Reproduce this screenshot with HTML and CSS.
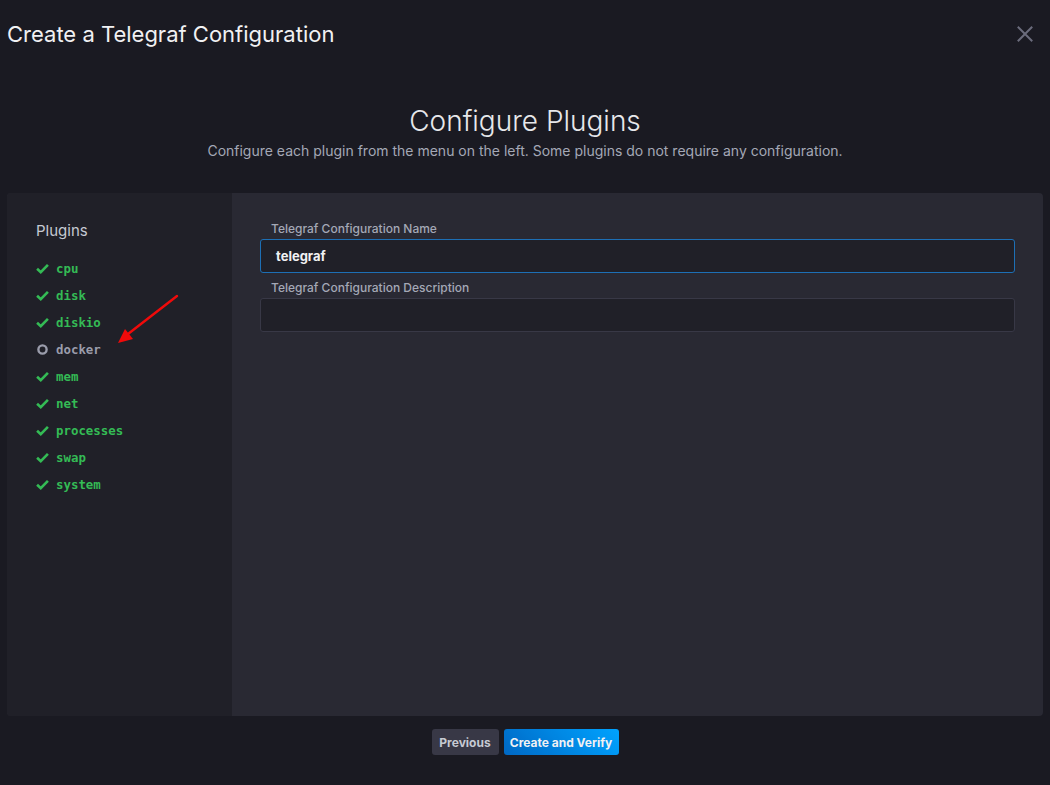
FILE: index.html
```html
<!DOCTYPE html>
<html>
<head>
<meta charset="utf-8">
<link rel="stylesheet" href="styles.css">
</head>
<body>
<div class="overlay">
  <header class="top">
    <h1 class="title">Create a Telegraf Configuration</h1>
    <button class="close" aria-label="close">
      <svg width="16" height="16" viewBox="0 0 16 16"><path d="M1.5 1.5 L14.5 14.5 M14.5 1.5 L1.5 14.5" stroke="#6b6c7c" stroke-width="2" stroke-linecap="square"/></svg>
    </button>
  </header>
  <div class="intro">
    <h2 class="heading">Configure Plugins</h2>
    <p class="sub">Configure each plugin from the menu on the left. Some plugins do not require any configuration.</p>
  </div>
  <div class="panel">
    <aside class="side">
      <h3 class="side-title">Plugins</h3>
      <ul class="plugins">
        <li class="ok"><svg class="ic" viewBox="0 0 12 10"><path d="M1 5.2 L4.4 8.4 L11 1.6" fill="none" stroke="currentColor" stroke-width="2.4"/></svg>cpu</li>
        <li class="ok"><svg class="ic" viewBox="0 0 12 10"><path d="M1 5.2 L4.4 8.4 L11 1.6" fill="none" stroke="currentColor" stroke-width="2.4"/></svg>disk</li>
        <li class="ok"><svg class="ic" viewBox="0 0 12 10"><path d="M1 5.2 L4.4 8.4 L11 1.6" fill="none" stroke="currentColor" stroke-width="2.4"/></svg>diskio</li>
        <li class="pending"><svg class="ic" viewBox="0 0 12 10"><circle cx="6" cy="5" r="3.8" fill="none" stroke="currentColor" stroke-width="2.2"/></svg>docker</li>
        <li class="ok"><svg class="ic" viewBox="0 0 12 10"><path d="M1 5.2 L4.4 8.4 L11 1.6" fill="none" stroke="currentColor" stroke-width="2.4"/></svg>mem</li>
        <li class="ok"><svg class="ic" viewBox="0 0 12 10"><path d="M1 5.2 L4.4 8.4 L11 1.6" fill="none" stroke="currentColor" stroke-width="2.4"/></svg>net</li>
        <li class="ok"><svg class="ic" viewBox="0 0 12 10"><path d="M1 5.2 L4.4 8.4 L11 1.6" fill="none" stroke="currentColor" stroke-width="2.4"/></svg>processes</li>
        <li class="ok"><svg class="ic" viewBox="0 0 12 10"><path d="M1 5.2 L4.4 8.4 L11 1.6" fill="none" stroke="currentColor" stroke-width="2.4"/></svg>swap</li>
        <li class="ok"><svg class="ic" viewBox="0 0 12 10"><path d="M1 5.2 L4.4 8.4 L11 1.6" fill="none" stroke="currentColor" stroke-width="2.4"/></svg>system</li>
      </ul>
      <svg class="arrow" width="70" height="56" viewBox="0 0 70 56">
        <path d="M65 2 L16 40" stroke="#f00a0a" stroke-width="2.4" stroke-linecap="round"/>
        <path d="M6 49 L13 35 L21 45 Z" fill="#f00a0a"/>
      </svg>
    </aside>
    <section class="main">
      <label class="label">Telegraf Configuration Name</label>
      <div class="input focused">telegraf</div>
      <label class="label">Telegraf Configuration Description</label>
      <div class="input"></div>
    </section>
  </div>
  <div class="actions">
    <button class="btn prev">Previous</button>
    <button class="btn primary">Create and Verify</button>
  </div>
</div>
</body>
</html>
```
FILE: styles.css
```css
* { box-sizing: border-box; }
html, body { margin: 0; padding: 0; }
body {
  width: 1050px;
  height: 785px;
  background: #1a1a22;
  font-family: Inter, Roboto, "Noto Sans", sans-serif;
  color: #e7e8eb;
  overflow: hidden;
}
.overlay {
  display: flex;
  flex-direction: column;
  height: 785px;
  padding: 0 7px;
}
.top {
  height: 68px;
  display: flex;
  align-items: center;
  justify-content: space-between;
}
.title {
  margin: 0;
  font-size: 22px;
  font-weight: 400;
  color: #f1f1f3;
}
.close {
  background: none;
  border: 0;
  padding: 0;
  margin-right: 10px;
  width: 16px;
  height: 16px;
  display: flex;
}
.intro {
  text-align: center;
  padding-top: 36px;
  height: 125px;
}
.heading {
  margin: 0;
  font-size: 28px;
  font-weight: 300;
  color: #e7e8eb;
  line-height: 34px;
}
.sub {
  margin: 4px 0 0;
  font-size: 14px;
  color: #a4a8b6;
  line-height: 18px;
}
.panel {
  display: flex;
  height: 523px;
  border-radius: 4px;
  overflow: hidden;
  background: #292933;
}
.side {
  position: relative;
  width: 225px;
  background: #202028;
  padding: 29px 0 0 29px;
}
.side-title {
  margin: 0 0 15px;
  font-size: 15px;
  font-weight: 400;
  color: #c6cad3;
  line-height: 18px;
}
.plugins {
  list-style: none;
  margin: 0;
  padding: 0;
}
.plugins li {
  display: flex;
  align-items: center;
  height: 27px;
  font-family: "DejaVu Sans Mono", monospace;
  font-size: 12.4px;
  font-weight: 700;
}
.plugins li.ok { color: #34bb55; }
.plugins li.pending { color: #9a9cab; }
.ic {
  width: 13px;
  height: 11px;
  margin-right: 7px;
}
.arrow {
  position: absolute;
  left: 105px;
  top: 101px;
}
.main {
  flex: 1;
  padding: 28px 28px 0 28px;
  display: flex;
  flex-direction: column;
}
.label {
  font-size: 12px;
  font-weight: 500;
  color: #a4a8b6;
  padding-left: 11px;
  line-height: 16px;
  margin-bottom: 2px;
}
.input {
  height: 34px;
  border: 1px solid #383846;
  border-radius: 3px;
  background: #202028;
  padding: 0 15px;
  font-size: 13px;
  font-weight: 700;
  color: #f1f1f3;
  line-height: 32px;
  margin-bottom: 7px;
}
.input.focused {
  border-color: #1d6fb5;
}
.actions {
  display: flex;
  justify-content: center;
  gap: 5px;
  padding-top: 13px;
}
.btn {
  height: 26px;
  border: 0;
  border-radius: 3px;
  font-family: Inter, Roboto, sans-serif;
  font-size: 12px;
  font-weight: 700;
  padding: 0 6px;
  color: #f1f1f3;
}
.btn.prev {
  background: #383846;
  color: #c6cad3;
  width: 67px;
}
.btn.primary {
  background: linear-gradient(45deg, #0068c4, #00a3ff);
  width: 115px;
}
```
